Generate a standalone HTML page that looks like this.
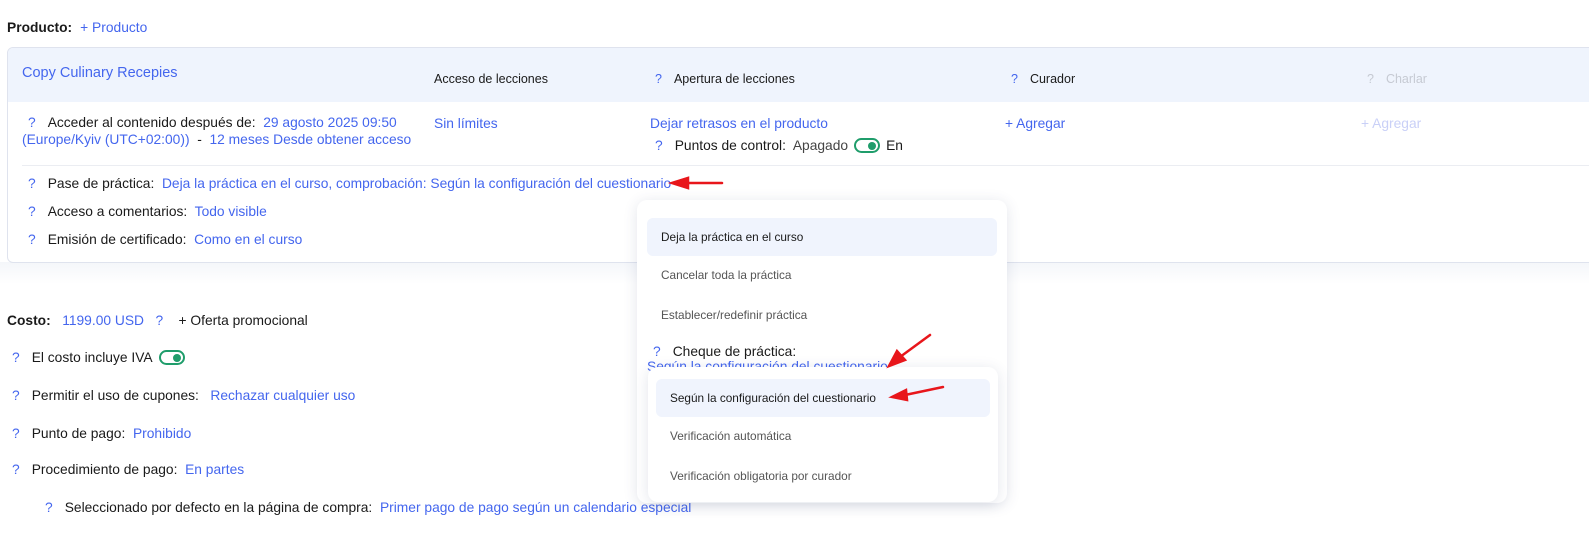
<!DOCTYPE html>
<html><head><meta charset="utf-8"><style>
*{margin:0;padding:0;box-sizing:border-box}
body{width:1589px;height:535px;background:#fff;font-family:"Liberation Sans",sans-serif;font-size:13.8px;color:#1a1a1a;position:relative;overflow:hidden}
.a{position:absolute;white-space:nowrap}
.b{color:#4466ee}
.q{color:#4466ee;margin-right:12px}
.s{font-size:12.5px}
.tg{display:inline-block;width:26px;height:15px;border:2px solid #1f9d6b;border-radius:8px;position:relative;vertical-align:-3px;margin:0 6px}
.tg:after{content:"";position:absolute;right:2px;top:1.5px;width:8px;height:8px;border-radius:50%;background:#1f9d6b}
.dd{position:absolute;background:#fff;border-radius:10px;box-shadow:0 2px 14px rgba(60,70,110,.14)}
.it{position:absolute;left:10px;right:10px;height:38px;border-radius:6px;padding-left:14px;line-height:38px;font-size:11.8px;color:#555}
.sel{background:#f0f4fd;color:#1a1a1a}
</style></head><body>
<div class="a" style="left:7px;top:20px;font-weight:bold">Producto:<span class="b" style="font-weight:normal;margin-left:8px">+ Producto</span></div>
<div class="a" style="left:0;top:262px;width:1589px;height:22px;background:linear-gradient(#f4f6fa,#fff)"></div>
<div class="a" style="left:7px;top:47px;width:1600px;height:216px;border:1px solid #dfe3ee;border-radius:6px;background:#fff;overflow:hidden">
 <div style="height:54px;background:#eff4fd"></div>
 <div style="position:absolute;left:14px;right:0;top:117px;border-top:1px solid #ebedf2"></div>
</div>
<div class="a b" style="left:22px;top:65px;font-size:14.5px">Copy Culinary Recepies</div>
<div class="a s" style="left:434px;top:72px">Acceso de lecciones</div>
<div class="a s" style="left:655px;top:72px"><span class="q">?</span>Apertura de lecciones</div>
<div class="a s" style="left:1011px;top:72px"><span class="q">?</span>Curador</div>
<div class="a s" style="left:1367px;top:72px;color:#c6cad3"><span style="margin-right:12px">?</span>Charlar</div>
<div class="a" style="left:28px;top:115px"><span class="q">?</span>Acceder al contenido después de:&nbsp; <span class="b">29 agosto 2025 09:50</span></div>
<div class="a" style="left:22px;top:132px"><span class="b">(Europe/Kyiv (UTC+02:00))</span>&nbsp; - &nbsp;<span class="b">12 meses Desde obtener acceso</span></div>
<div class="a b" style="left:434px;top:116px">Sin límites</div>
<div class="a b" style="left:650px;top:116px">Dejar retrasos en el producto</div>
<div class="a" style="left:655px;top:138px"><span class="q">?</span>Puntos de control:&nbsp; <span style="color:#444">Apagado</span><span class="tg"></span>En</div>
<div class="a b" style="left:1005px;top:116px">+ Agregar</div>
<div class="a" style="left:1361px;top:116px;color:#c9d0f7">+ Agregar</div>
<div class="a" style="left:28px;top:176px"><span class="q">?</span>Pase de práctica:&nbsp; <span class="b">Deja la práctica en el curso, comprobación: Según la configuración del cuestionario</span></div>
<div class="a" style="left:28px;top:204px"><span class="q">?</span>Acceso a comentarios:&nbsp; <span class="b">Todo visible</span></div>
<div class="a" style="left:28px;top:232px"><span class="q">?</span>Emisión de certificado:&nbsp; <span class="b">Como en el curso</span></div>
<div class="a" style="left:7px;top:313px"><b>Costo:</b>&nbsp;&nbsp; <span class="b">1199.00 USD</span>&nbsp;&nbsp; <span class="b">?</span>&nbsp;&nbsp;&nbsp; + Oferta promocional</div>
<div class="a" style="left:12px;top:350px"><span class="q">?</span>El costo incluye IVA<span class="tg"></span></div>
<div class="a" style="left:12px;top:388px"><span class="q">?</span>Permitir el uso de cupones:&nbsp;&nbsp; <span class="b">Rechazar cualquier uso</span></div>
<div class="a" style="left:12px;top:426px"><span class="q">?</span>Punto de pago:&nbsp; <span class="b">Prohibido</span></div>
<div class="a" style="left:12px;top:462px"><span class="q">?</span>Procedimiento de pago:&nbsp; <span class="b">En partes</span></div>
<div class="a" style="left:45px;top:500px"><span class="q">?</span>Seleccionado por defecto en la página de compra:&nbsp; <span class="b">Primer pago de pago según un calendario especial</span></div>
<div class="dd" style="left:637px;top:200px;width:370px;height:303px">
 <div class="it sel" style="top:18px">Deja la práctica en el curso</div>
 <div class="it" style="top:56px">Cancelar toda la práctica</div>
 <div class="it" style="top:96px">Establecer/redefinir práctica</div>
 <div class="a" style="left:16px;top:144px"><span class="q">?</span>Cheque de práctica:</div>
 <div class="a b" style="left:10px;top:159px;height:13px;overflow:hidden">Según la configuración del cuestionario</div>
</div>
<div class="dd" style="left:648px;top:367px;width:350px;height:135px">
 <div class="it sel" style="top:12px;left:8px;right:8px;color:#1a1a1a">Según la configuración del cuestionario</div>
 <div class="it" style="top:50px;left:8px;right:8px">Verificación automática</div>
 <div class="it" style="top:90px;left:8px;right:8px">Verificación obligatoria por curador</div>
</div>
<svg class="a" style="left:0;top:0" width="1589" height="535">
 <g stroke="#e8161b" stroke-width="2.5" fill="#e8161b" stroke-linecap="round">
  <line x1="722" y1="183" x2="685" y2="183"/><polygon points="672,183 688,178 688,188"/>
  <line x1="930" y1="335" x2="900" y2="357"/><polygon points="889,366 897,351 905,360"/>
  <line x1="943" y1="387" x2="905" y2="395"/><polygon points="892,397 906,390 907,400"/>
 </g>
</svg>
</body></html>
